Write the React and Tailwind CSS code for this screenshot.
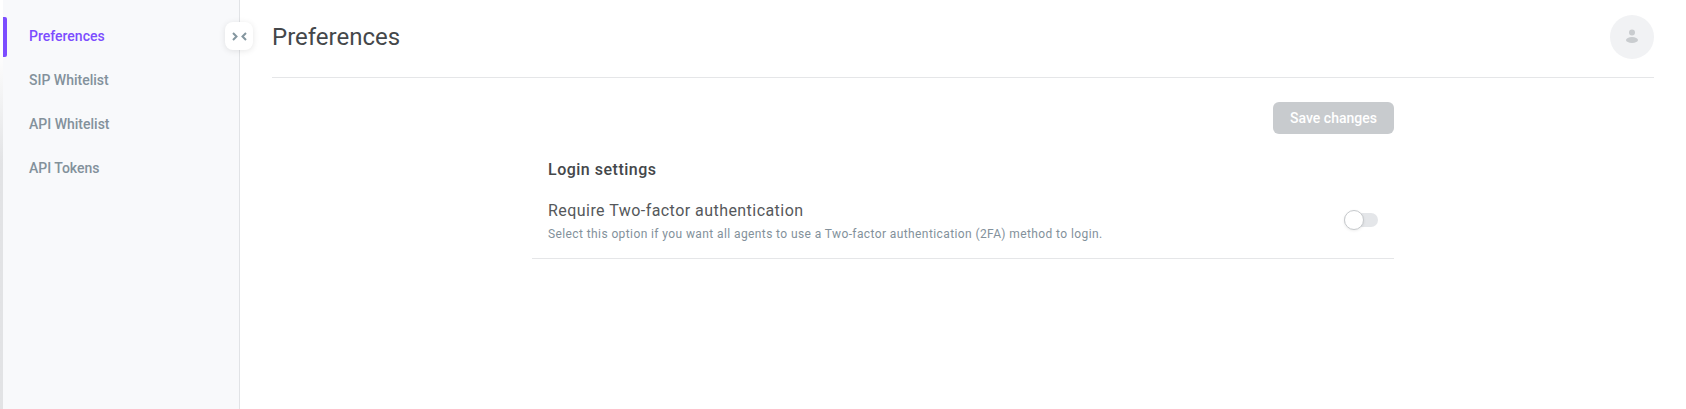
import React from "react";

const NAV_ITEMS = ["Preferences", "SIP Whitelist", "API Whitelist", "API Tokens"];

const App = () => {
  return (
    <div className="flex h-[409px] w-[1686px] overflow-hidden bg-white font-['Roboto',sans-serif]">
      <div className="w-[3px] shrink-0 bg-linear-to-b from-white from-[12%] to-[#e2e3e5] to-[40%]" />
      <aside className="relative w-[237px] shrink-0 border-r border-[#e1e3e6] bg-[#f8f9fb] pt-[17px]">
        {NAV_ITEMS.map((item, i) => (
          <div key={item} className="relative flex h-[44px] items-center pl-[26px]">
            {i === 0 && (
              <span className="absolute top-0 left-0 h-[40px] w-[4px] rounded-r-[2px] bg-[#7c4dff]" />
            )}
            <span
              className={
                i === 0
                  ? "-mt-[6px] text-[14px] font-medium text-[#7c4dff]"
                  : "-mt-[6px] text-[14px] font-medium text-[#83919b]"
              }
            >
              {item}
            </span>
          </div>
        ))}
        <button className="absolute top-[22px] right-[-14px] flex h-[28px] w-[28px] items-center justify-center gap-[3px] rounded-[8px] bg-white shadow-[0_1px_6px_rgba(0,0,0,0.1)]">
          <svg width="6" height="9" viewBox="0 0 6 9" fill="none">
            <path d="M1 1l3.5 3.5L1 8" stroke="#84969f" strokeWidth="2" />
          </svg>
          <svg width="6" height="9" viewBox="0 0 6 9" fill="none">
            <path d="M5 1L1.5 4.5 5 8" stroke="#84969f" strokeWidth="2" />
          </svg>
        </button>
      </aside>
      <main className="flex-1 pr-[32px] pl-[32px]">
        <header className="flex h-[78px] items-center justify-between border-b border-[#e5e6e8] pb-[4px]">
          <h1 className="text-[24px] font-normal text-[#44474a]">Preferences</h1>
          <div className="flex h-[44px] w-[44px] items-center justify-center rounded-full bg-[#f1f2f4]">
            <svg width="14" height="15" viewBox="0 0 14 15" fill="#c9cccf">
              <circle cx="7" cy="3.5" r="3" />
              <ellipse cx="7" cy="11" rx="6" ry="3" />
            </svg>
          </div>
        </header>
        <div className="ml-[260px] w-[862px]">
          <div className="mt-[24px] flex justify-end">
            <button className="h-[32px] w-[121px] rounded-[6px] bg-[#c8cbce] text-[14px] font-medium text-white">
              Save changes
            </button>
          </div>
          <h2 className="mt-[26px] pl-[16px] text-[16px] leading-[20px] font-medium tracking-[0.5px] text-[#44474a]">
            Login settings
          </h2>
          <div className="flex h-[79px] items-center justify-between border-b border-[#e5e6e8] pr-[16px] pl-[16px]">
            <div className="pt-[4px]">
              <p className="text-[16px] leading-[20px] tracking-[0.45px] text-[#55585b]">
                Require Two-factor authentication
              </p>
              <p className="mt-[5px] text-[12px] leading-[16px] tracking-[0.4px] text-[#83919b]">
                Select this option if you want all agents to use a Two-factor authentication (2FA) method to login.
              </p>
            </div>
            <div className="relative mt-[2px] h-[14px] w-[34px] rounded-full bg-[#e4e6e9]">
              <span className="absolute top-[-3px] left-0 h-[20px] w-[20px] rounded-full border border-[#c6c9cc] bg-white shadow-[0_1px_3px_rgba(0,0,0,0.08)]" />
            </div>
          </div>
        </div>
      </main>
    </div>
  );
};

export default App;
